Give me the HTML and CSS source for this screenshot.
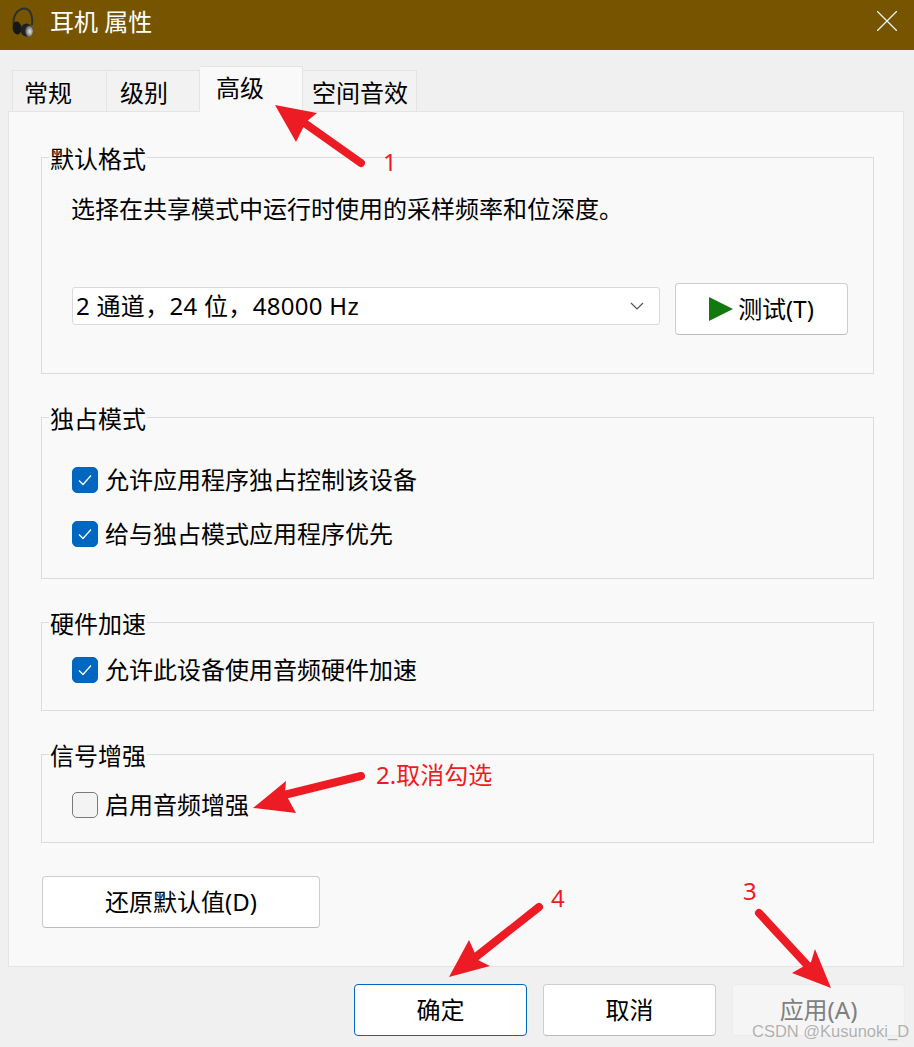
FILE: index.html
```html
<!DOCTYPE html>
<html lang="zh-CN">
<head>
<meta charset="utf-8">
<title>耳机 属性</title>
<link rel="stylesheet" href="styles.css">
</head>
<body>
<div class="window">
  <header class="titlebar">
    <svg class="app-icon" viewBox="0 0 24 30" width="24" height="30">
      <defs>
        <radialGradient id="cup" cx="0.6" cy="0.55" r="0.6"><stop offset="0" stop-color="#e8e8e8"/><stop offset="0.6" stop-color="#8d8d8d"/><stop offset="1" stop-color="#3a3a3a"/></radialGradient>
      </defs>
      <path d="M3 19C1 10 6 2 13 1.500C19 1.500 22 8 21 18" fill="none" stroke="#2f2f33" stroke-width="2"/>
      <ellipse cx="6" cy="21" rx="4.500" ry="6.500" fill="#17171a" transform="rotate(-8 6 21)"/>
      <ellipse cx="15.500" cy="23" rx="6" ry="6.500" fill="#202023"/>
      <ellipse cx="18" cy="24" rx="4" ry="5.500" fill="url(#cup)"/>
    </svg>
    <span class="title">耳机 属性</span>
    <svg class="close" viewBox="0 0 20 20" width="20" height="20"><path d="M0 0L20 20M20 0L0 20" stroke="#f2f2f2" stroke-width="1.300" fill="none"/></svg>
  </header>

  <nav class="tabs">
    <div class="tab tab-a">常规</div>
    <div class="tab tab-b">级别</div>
    <div class="tab tab-active">高级</div>
    <div class="tab tab-c">空间音效</div>
  </nav>

  <main class="panel">
    <section class="group group-format">
      <div class="legend">默认格式</div>
      <p class="desc">选择在共享模式中运行时使用的采样频率和位深度。</p>
      <div class="format-row">
        <div class="select">
          <span>2 通道，24 位，48000 Hz</span>
          <svg viewBox="0 0 14 8" width="14" height="8"><path d="M1 1L7 7L13 1" fill="none" stroke="#555" stroke-width="1.200"/></svg>
        </div>
        <button class="btn btn-test">
          <svg viewBox="0 0 24 24" width="24" height="24"><path d="M0 0L24 12L0 24Z" fill="#117a0f"/></svg>
          <span>测试(T)</span>
        </button>
      </div>
    </section>

    <section class="group group-exclusive">
      <div class="legend">独占模式</div>
      <div class="check-row"><span class="box on"><svg viewBox="0 0 14 12" width="14" height="12"><path d="M1 6.500L5 10.500L13 1.500" fill="none" stroke="#fff" stroke-width="1.300"/></svg></span>允许应用程序独占控制该设备</div>
      <div class="check-row"><span class="box on"><svg viewBox="0 0 14 12" width="14" height="12"><path d="M1 6.500L5 10.500L13 1.500" fill="none" stroke="#fff" stroke-width="1.300"/></svg></span>给与独占模式应用程序优先</div>
    </section>

    <section class="group group-hw">
      <div class="legend">硬件加速</div>
      <div class="check-row"><span class="box on"><svg viewBox="0 0 14 12" width="14" height="12"><path d="M1 6.500L5 10.500L13 1.500" fill="none" stroke="#fff" stroke-width="1.300"/></svg></span>允许此设备使用音频硬件加速</div>
    </section>

    <section class="group group-signal">
      <div class="legend">信号增强</div>
      <div class="check-row"><span class="box"></span>启用音频增强</div>
    </section>

    <button class="btn btn-restore">还原默认值(D)</button>
  </main>

  <footer class="actions">
    <button class="btn btn-action btn-default">确定</button>
    <button class="btn btn-action">取消</button>
    <button class="btn btn-action btn-disabled">应用(A)</button>
  </footer>
</div>

<svg class="annotations" viewBox="0 0 914 1047" width="914" height="1047">
  <g fill="#ed1c24">
    <path d="M275 105L317 113L306 122L296 142Z"/>
    <path d="M253 808L286 781L285 793L296 813Z"/>
    <path d="M831 988L815 949L811 962L792 973Z"/>
    <path d="M449 977L469 940L478 960L490 966Z"/>
  </g>
  <g stroke="#ed1c24" stroke-width="8" stroke-linecap="round" fill="none">
    <path d="M303 122L361 163"/>
    <path d="M280 796L361 776"/>
    <path d="M808 966L759 913"/>
    <path d="M472 960L539 907"/>
  </g>
  <g class="note">
    <text x="383" y="171">1</text>
    <text x="376" y="784">2.取消勾选</text>
    <text x="743" y="900">3</text>
    <text x="551" y="907">4</text>
  </g>
  <text class="watermark" x="752" y="1037">CSDN @Kusunoki_D</text>
</svg>
</body>
</html>
```

FILE: styles.css
```css
* { box-sizing: border-box; }

html, body {
  margin: 0;
  padding: 0;
}

body {
  width: 914px;
  height: 1047px;
  overflow: hidden;
  position: relative;
  background: #f0f0f0;
  color: #000;
  font-family: "Noto Sans", "Noto Sans CJK SC", sans-serif;
  font-size: 24px;
  line-height: 32px;
}

.titlebar {
  display: flex;
  align-items: center;
  height: 50px;
  background: #775500;
  color: #fff;
  padding: 0 17px 6px 11px;
}

.app-icon { flex: none; }

.title {
  margin-left: 15px;
  flex: 1;
}

.close { flex: none; margin-bottom: 2px; }

.tabs {
  display: flex;
  align-items: flex-end;
  height: 61px;
  padding-left: 12px;
  position: relative;
  z-index: 1;
}

.tab {
  height: 41px;
  background: #f2f2f2;
  border: 1px solid #e4e4e4;
  border-bottom: 0;
  border-left-width: 0;
  padding-top: 6px;
}

.tab-a { width: 95px; border-left-width: 1px; padding-left: 11px; }
.tab-b { width: 93px; padding-left: 13px; }
.tab-c { width: 114px; padding-left: 9px; }

.tab-active {
  width: 103px;
  height: 46px;
  margin-bottom: -1px;
  background: #f9f9f9;
  border-radius: 2px 2px 0 0;
  padding-top: 5px;
  padding-left: 16px;
}

.panel {
  margin: 0 10px 0 8px;
  height: 856px;
  background: #f9f9f9;
  border: 1px solid #e4e4e4;
  padding: 45px 29px 0 32px;
}

.group {
  border: 1px solid #dcdcdc;
  margin-bottom: 43px;
  padding: 0 0 0 30px;
}

.legend {
  width: fit-content;
  margin: -15px 0 0 -23px;
  padding: 0 1px;
  background: #f9f9f9;
  height: 32px;
}

.group-format { height: 217px; }
.group-exclusive { height: 162px; }
.group-hw { height: 89px; }
.group-signal { height: 89px; margin-bottom: 33px; }

.desc {
  margin: 18px 0 0 -1px;
  height: 32px;
}

.format-row {
  display: flex;
  align-items: flex-start;
  gap: 15px;
  margin-top: 58px;
}

.select {
  width: 588px;
  height: 38px;
  margin-top: 4px;
  display: flex;
  align-items: center;
  justify-content: space-between;
  background: #fff;
  border: 1px solid #d9d9d9;
  border-radius: 3px;
  padding: 0 15px 0 3px;
  letter-spacing: 0.3px;
}

.btn {
  font: inherit;
  color: #000;
  background: #fff;
  border: 1px solid #cdcdcd;
  border-bottom-color: #bcbcbc;
  border-radius: 4px;
  padding: 0;
}

.btn-test {
  width: 173px;
  height: 52px;
  display: flex;
  align-items: center;
  justify-content: center;
  gap: 5px;
}

.check-row {
  display: flex;
  align-items: center;
  height: 32px;
  gap: 7px;
}

.group-exclusive .check-row { margin-top: 22px; }
.group-exclusive .legend + .check-row { margin-top: 29px; }
.group-hw .check-row { margin-top: 14px; }
.group-signal .check-row { margin-top: 17px; }

.box {
  flex: none;
  width: 26px;
  height: 26px;
  border-radius: 5px;
  border: 1px solid #7a7a7a;
  background: #f3f3f3;
  display: flex;
  align-items: center;
  justify-content: center;
}

.box.on {
  background: #0067c0;
  border-color: #0067c0;
}

.btn-restore {
  display: block;
  width: 278px;
  height: 52px;
  margin-left: 1px;
}

.actions {
  display: flex;
  gap: 16px;
  padding: 17px 9px 0 354px;
}

.btn-action {
  width: 173px;
  height: 52px;
}

.btn-default {
  border: 1px solid #0067c0;
}

.btn-disabled {
  background: #f5f5f5;
  border-color: #ececec;
  color: #7f7f7f;
}

.annotations {
  position: absolute;
  left: 0;
  top: 0;
  pointer-events: none;
  z-index: 2;
}

.note {
  fill: #ed1c24;
  font-size: 24px;
}

.watermark {
  fill: #9a9a9a;
  fill-opacity: 0.75;
  font-size: 16.500px;
  font-family: "Liberation Sans", sans-serif;
}
```
